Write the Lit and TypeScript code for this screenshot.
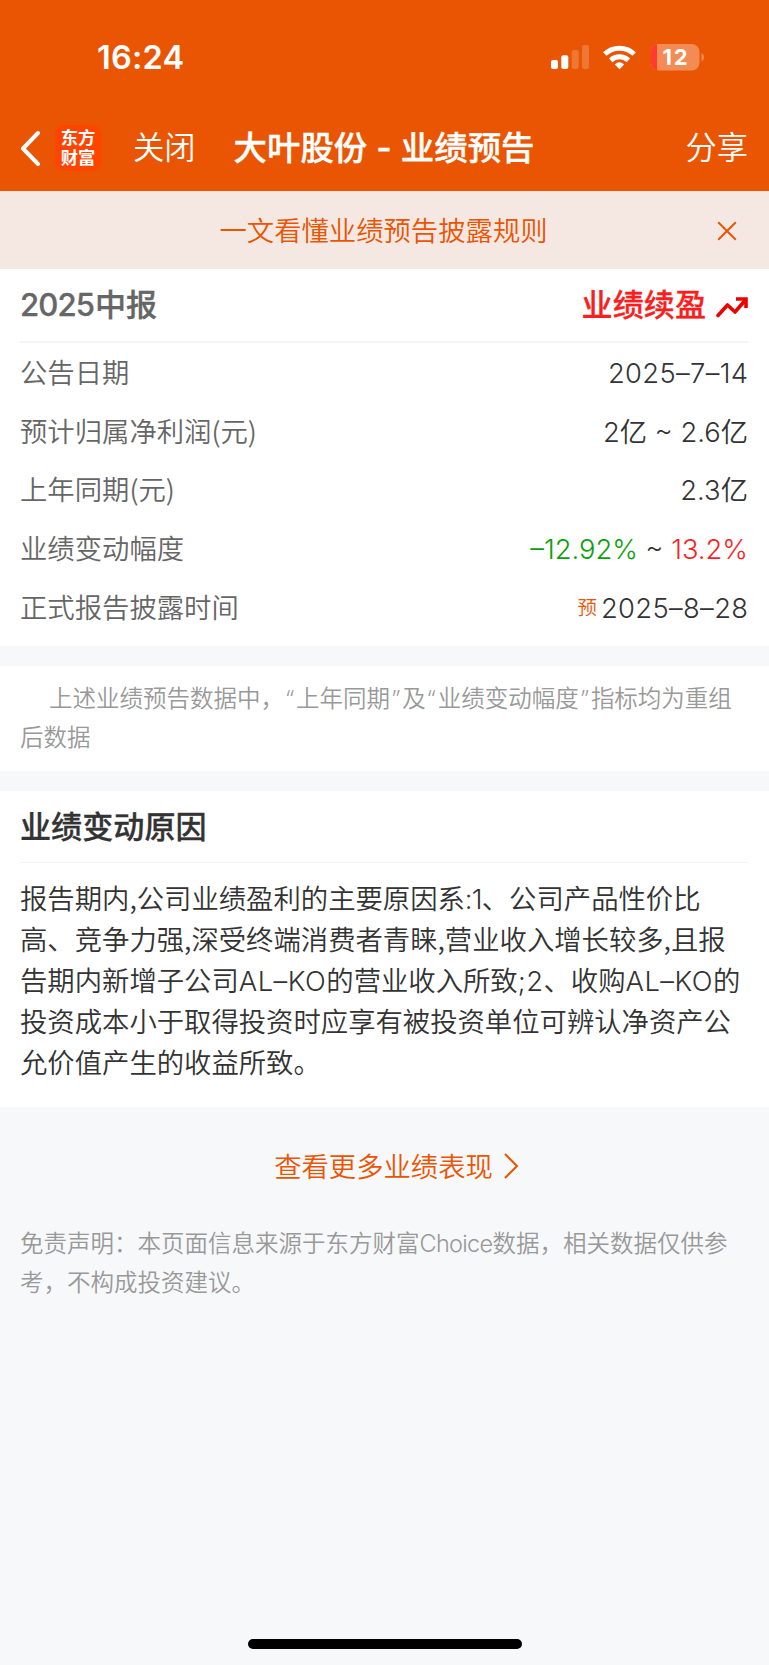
import { LitElement, html, css } from "lit";
import { customElement } from "lit/decorators.js";

@customElement("status-bar")
class StatusBar extends LitElement {
  static styles = css`
    :host { display: flex; height: 106px; padding: 0 64px 0 97px; box-sizing: border-box; justify-content: space-between; }
    .time { font: 600 32.5px/40px Inter, sans-serif; margin-top: 38px; letter-spacing: 0.2px; }
    .icons { margin-top: 42px; }
    svg { display: block; }
    text { font: 700 22px Inter, sans-serif; }
  `;
  render() {
    return html`
      <div class="time">16:24</div>
      <svg class="icons" width="154" height="32" viewBox="0 0 154 32" fill="#fff">
        <rect x="0" y="18" width="7" height="9" rx="2" />
        <rect x="10.3" y="13.3" width="7" height="13.7" rx="2" />
        <rect x="20.7" y="8" width="7" height="19" rx="2" opacity=".2" />
        <rect x="31" y="3" width="7" height="24" rx="2" opacity=".2" />
        <g fill="none" stroke="#fff" stroke-width="5">
          <path d="M53.8 12 A21.5 21.5 0 0 1 83.2 12" />
          <path d="M59.7 18.3 A12.9 12.9 0 0 1 77.3 18.3" />
        </g>
        <path d="M68.5 27.2 L63.8 22.4 Q68.5 18 73.2 22.4 Z" />
        <clipPath id="b"><rect x="100" y="2" width="48.5" height="26.5" rx="8" /></clipPath>
        <g clip-path="url(#b)">
          <rect x="100" y="2" width="49" height="27" fill="#f28c54" />
          <rect x="100" y="2" width="6" height="27" fill="#ff3b30" />
        </g>
        <path d="M150.5 11 Q153 12.5 153 15.2 Q153 18 150.5 19.5 Z" fill="#f28c54" />
        <text x="111.5" y="23.2" textLength="25">12</text>
      </svg>
    `;
  }
}

@customElement("nav-bar")
class NavBar extends LitElement {
  static styles = css`
    :host { display: flex; height: 85px; padding: 0 21px 2px 20px; box-sizing: border-box; align-items: center; }
    svg { display: block; margin-right: 14px; }
    .logo { width: 46px; height: 46px; border-radius: 9px; background: #ff4400; display: flex; flex-direction: column; align-items: center; justify-content: center; font: 700 17.3px/20px "Noto Sans CJK SC", sans-serif; padding-bottom: 2px; box-sizing: border-box; }
    .item { font-size: 31.3px; line-height: 46px; font-weight: 350; margin-top: -3px; }
    .close { margin-left: 32px; }
    .title { font-size: 33.4px; line-height: 46px; font-weight: 500; margin: -3px 0 0 38px; flex: 1; white-space: nowrap; word-spacing: 1.6px; -webkit-text-stroke: 0.4px #fff; }
    .dash { font-family: Inter, sans-serif; font-weight: 500; line-height: 1; }
  `;
  render() {
    return html`
      <svg width="21" height="36" viewBox="0 0 21 36" fill="none" stroke="#fff" stroke-width="4" stroke-linecap="round" stroke-linejoin="round"><path d="M18 3 L3 18.5 L18 34" /></svg>
      <div class="logo"><span>东方</span><span>财富</span></div>
      <div class="item close">关闭</div>
      <div class="title">大叶股份 <span class="dash">-</span> 业绩预告</div>
      <div class="item">分享</div>
    `;
  }
}

@customElement("app-root")
class AppRoot extends LitElement {
  static styles = css`
    :host { display: flex; flex-direction: column; width: 769px; height: 1665px; background: #f6f8fa; color: #333; overflow: hidden;
      font-family: "Noto Sans CJK SC", sans-serif; font-size: 27.35px; font-weight: 350; }
    header { background: #ea5504; color: #fff; height: 191px; }
    .notice { height: 78px; box-sizing: border-box; background: #f5e8e3; color: #ea5504; display: grid; grid-template-columns: 40px 1fr 40px; padding: 0 22px 2px 20px; align-items: center; text-align: center; }
    .notice svg { justify-self: center; margin-top: 3px; }
    .card { background: #fff; padding: 0 21px 0 20px; }
    .gap { height: 20px; flex: none; }
    .head { display: flex; justify-content: space-between; height: 72px; line-height: 68px; font-size: 31.1px; font-weight: 500; border-bottom: 2px solid #f3f4f5; color: #666; -webkit-text-stroke: 0.3px currentColor; }
    .head-num { font-family: Inter, sans-serif; font-weight: 500; letter-spacing: -0.9px; line-height: 1; margin-right: 1px; }
    .state { color: #f91f1f; display: flex; align-items: center; gap: 10px; height: 68px; }
    .state svg { margin-top: 7px; }
    .row { display: flex; justify-content: space-between; align-items: baseline; height: 58.7px; line-height: 56.7px; }
    .rows { height: 303px; }
    .label { color: #666; }
    .num { font-family: Inter, "Noto Sans CJK SC", sans-serif; font-weight: 350; line-height: 1; }
    .date { letter-spacing: 0.35px; margin-right: -0.35px; }
    .value { display: flex; align-items: baseline; }
    .green { color: #0a9f0a; }
    .red { color: #f91f1f; }
    .pre { color: #ea5504; font-size: 19.5px; line-height: 1; margin-right: 4px; position: relative; top: -3px; }
    .note { height: 105px; box-sizing: border-box; padding-top: 12px; color: #999; font-size: 23.5px; line-height: 39px; white-space: nowrap; }
    .note div, .legal div { height: 39px; }
    .note .first { padding-left: 29px; }
    .quote { font-family: "Noto Sans", sans-serif; line-height: 1; display: inline-block; width: 12.1px; text-align: center; }
    .reason { height: 316px; }
    .reason .head { height: 71px; line-height: 68px; color: #333; border-bottom: 1px solid #f3f4f5; }
    .text { padding-top: 14px; line-height: 41px; white-space: nowrap; }
    .text div { height: 41px; }
    .code { letter-spacing: 0.5px; }
    .one { letter-spacing: -0.8px; }
    .two { letter-spacing: 0.5px; }
    .choice { letter-spacing: -0.7px; }
    .more { display: flex; justify-content: center; align-items: center; gap: 10px; color: #ea5504; line-height: 41px; padding: 38px 0 0 24px; }
    .legal { color: #999; font-size: 23.5px; line-height: 39px; padding: 37px 20px 0; white-space: nowrap; }
    .home { width: 274px; height: 10px; border-radius: 5px; background: #000; margin: auto auto 16px; }
  `;
  rows = [
    ["公告日期", html`<span class="num date">2025–7–14</span>`],
    ["预计归属净利润(元)", html`<span class="num">2亿 ~ 2.6亿</span>`],
    ["上年同期(元)", html`<span class="num">2.3亿</span>`],
    ["业绩变动幅度", html`<span class="num"><span class="green">–12.92%</span> ~ <span class="red">13.2%</span></span>`],
    ["正式报告披露时间", html`<span class="pre">预</span><span class="num date">2025–8–28</span>`],
  ];
  render() {
    return html`
      <header><status-bar></status-bar><nav-bar></nav-bar></header>
      <div class="notice"><span></span><span>一文看懂业绩预告披露规则</span>
        <svg width="20" height="20" viewBox="0 0 20 20" stroke="#ea5504" stroke-width="2"><path d="M1.2 1.2 L18.8 18.8 M18.8 1.2 L1.2 18.8" /></svg></div>
      <section class="card">
        <div class="head"><span><span class="head-num">2025</span>中报</span>
          <span class="state">业绩续盈
            <svg width="32" height="22" viewBox="0 0 32 22" fill="none" stroke="#ec0000" stroke-width="3.6"><path d="M2 19.5 L11.5 9 L19 16 L29 4.5" stroke-linejoin="round" stroke-linecap="round" /><path d="M20 3 H30 V12" /></svg></span></div>
        <div class="rows">${this.rows.map(([l, v]) => html`<div class="row"><span class="label">${l}</span><span class="value">${v}</span></div>`)}</div>
      </section>
      <div class="gap"></div>
      <section class="card note">
        <div class="first">上述业绩预告数据中，<span class="quote">“</span>上年同期<span class="quote">”</span>及<span class="quote">“</span>业绩变动幅度<span class="quote">”</span>指标均为重组</div>
        <div>后数据</div>
      </section>
      <div class="gap"></div>
      <section class="card reason">
        <div class="head"><span>业绩变动原因</span></div>
        <div class="text">
          <div>报告期内,公司业绩盈利的主要原因系<span class="num one">:1</span>、公司产品性价比</div>
          <div>高、竞争力强,深受终端消费者青睐,营业收入增长较多,且报</div>
          <div>告期内新增子公司<span class="num code">AL–KO</span>的营业收入所致<span class="num two">;2</span>、收购<span class="num code">AL–KO</span>的</div>
          <div>投资成本小于取得投资时应享有被投资单位可辨认净资产公</div>
          <div>允价值产生的收益所致。</div>
        </div>
      </section>
      <div class="more"><span>查看更多业绩表现</span>
        <svg width="16" height="26" viewBox="0 0 16 26" fill="none" stroke="#ea5504" stroke-width="2"><path d="M2 1 L14 13 L2 25" /></svg></div>
      <div class="legal"><div>免责声明：本页面信息来源于东方财富<span class="num choice">Choice</span>数据，相关数据仅供参</div><div>考，不构成投资建议。</div></div>
      <div class="home"></div>
    `;
  }
}
